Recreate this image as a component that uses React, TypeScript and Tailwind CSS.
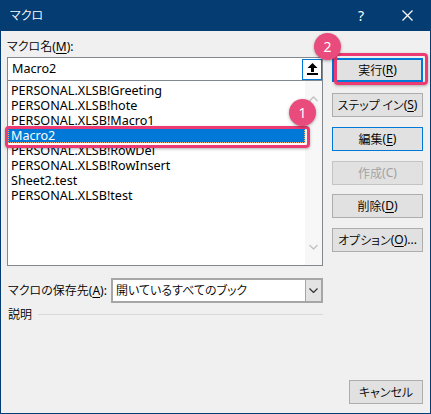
const rows = [
  "PERSONAL.XLSB!Greeting",
  "PERSONAL.XLSB!hote",
  "PERSONAL.XLSB!Macro1",
  "Macro2",
  "PERSONAL.XLSB!RowDel",
  "PERSONAL.XLSB!RowInsert",
  "Sheet2.test",
  "PERSONAL.XLSB!test",
];

// japanese text, narrower + lighter like Meiryo UI
const J = ({ children }: { children: React.ReactNode }) => (
  <span className="font-['Noto_Sans_CJK_JP',sans-serif] font-[350] [font-feature-settings:'palt']">{children}</span>
);

const Btn = ({ label, k, rest, cls, top }: { label: string; k: string; rest?: string; cls?: string; top: string }) => (
  <div className={`${top} h-[24px] flex items-center justify-center bg-[#e1e1e1] border ${cls || "border-[#adadad]"}`}>
    <J>{label}</J>(<span className="underline underline-offset-2">{k}</span>){rest}
  </div>
);

export default function App() {
  return (
    <div className="w-[431px] h-[414px] bg-[#053c72] flex flex-col px-[1px] pb-[1px] text-[12px] text-black font-['Noto_Sans','Noto_Sans_CJK_JP',sans-serif]">
      <div className="h-[31px] shrink-0 flex items-center text-white">
        <span className="ml-[9px]"><J>マクロ</J></span>
        <span className="ml-auto mr-[38px] text-[14px]">?</span>
        <svg width="11" height="11" viewBox="0 0 11 11" className="mr-[17px]">
          <path d="M0.5 0.5 L10.5 10.5 M10.5 0.5 L0.5 10.5" stroke="white" strokeWidth="1.2" />
        </svg>
      </div>

      <div className="flex-1 bg-[#f0f0f0] relative flex flex-col">
        <div className="flex">
          <div className="w-[316px] ml-[6px] flex flex-col">
            <div className="mt-[6px] h-[18px] leading-[18px]">
              <J>マクロ名</J>(<span className="underline underline-offset-2">M</span>):
            </div>
            <div className="mt-[2px] h-[24px] bg-white border border-[#828790] flex items-center text-[12.6px]">
              <span className="pl-[4px]">Macro2</span>
              <div className="ml-auto w-[20px] h-[21px] border border-[#0078d7] flex items-center justify-center">
                <svg width="11" height="12" viewBox="0 0 11 12">
                  <path d="M5.5 0 L10.5 5 L7 5 L7 9 L4 9 L4 5 L0.5 5 Z" fill="black" />
                  <rect x="0" y="10" width="11" height="2" fill="black" />
                </svg>
              </div>
            </div>
            <div className="h-[185px] bg-white border border-t-0 border-[#828790] flex text-[12.6px]">
              <div className="flex-1 pt-[2px]">
                {rows.map((r) =>
                  r === "Macro2" ? (
                    <div key={r} className="h-[15px] leading-[13px] bg-[#0078d7] text-white pl-[2px] border border-dotted border-[#f5b070]">
                      {r}
                    </div>
                  ) : (
                    <div key={r} className="h-[15px] leading-[15px] pl-[3px]">
                      {r}
                    </div>
                  )
                )}
              </div>
              <div className="w-[17px] bg-[#f7f7f7] flex flex-col items-center justify-between py-[15px]">
                <svg width="9" height="6" viewBox="0 0 9 6">
                  <path d="M0.5 5 L4.5 1 L8.5 5" stroke="#c2c2c2" strokeWidth="1.3" fill="none" />
                </svg>
                <svg width="9" height="6" viewBox="0 0 9 6">
                  <path d="M0.5 1 L4.5 5 L8.5 1" stroke="#c2c2c2" strokeWidth="1.3" fill="none" />
                </svg>
              </div>
            </div>
            <div className="mt-[12px] h-[25px] flex items-center">
              <span className="w-[104px] pl-[1px]">
                <J>マクロの保存先</J>(<span className="underline underline-offset-2">A</span>):
              </span>
              <div className="flex-1 h-[25px] bg-white border-2 border-[#a6a6a6] flex items-center">
                <span className="pl-[3px]"><J>開いているすべてのブック</J></span>
                <div className="ml-auto w-[16px] h-full bg-[#e3e3e3] border-l border-[#a6a6a6] flex items-center justify-center">
                  <svg width="9" height="5" viewBox="0 0 9 5">
                    <path d="M0.5 0.5 L4.5 4.5 L8.5 0.5" stroke="#333" strokeWidth="1.2" fill="none" />
                  </svg>
                </div>
              </div>
            </div>
            <div className="mt-[2px] h-[18px] flex items-center">
              <span className="pl-[1px]"><J>説明</J></span>
              <div className="flex-1 ml-[6px] h-px bg-[#d9d9d9]" />
            </div>
          </div>

          <div className="w-[91px] ml-[9px] flex flex-col">
            <Btn top="mt-[27px]" label="実行" k="R" cls="border-2 border-[#0078d7]" />
            <Btn top="mt-[11px]" label="ステップ イン" k="S" />
            <Btn top="mt-[10px]" label="編集" k="E" cls="border-[#0078d7]" />
            <div className="mt-[10px] h-[24px] flex items-center justify-center bg-[#e1e1e1] border border-[#c4c4c4] text-[#a0a0a0]">
              <J>作成</J>(C)
            </div>
            <Btn top="mt-[9px]" label="削除" k="D" />
            <Btn top="mt-[10px]" label="オプション" k="O" rest="..." />
          </div>
        </div>

        <div className="mt-auto mb-[9px] mr-[7px] self-end w-[74px] h-[24px] flex items-center justify-center bg-[#e1e1e1] border border-[#adadad]">
          <J>キャンセル</J>
        </div>

        <div className="absolute left-[4px] top-[95px] w-[305px] h-[22px] border-[3px] border-[#ec3a72] rounded-[4px] shadow-[0_1px_3px_rgba(0,0,0,0.3)]" />
        <div className="absolute left-[333px] top-[22px] w-[94px] h-[32px] border-[3px] border-[#ec3a72] rounded-[4px] shadow-[0_1px_3px_rgba(0,0,0,0.3)]" />
        <div className="absolute left-[288px] top-[68px] w-[27px] h-[27px] rounded-full bg-[#e94b7c] text-white text-[14px] flex items-center justify-center shadow-[0_1px_3px_rgba(0,0,0,0.35)]">
          1
        </div>
        <div className="absolute left-[313px] top-[2px] w-[27px] h-[27px] rounded-full bg-[#e94b7c] text-white text-[14px] flex items-center justify-center shadow-[0_1px_3px_rgba(0,0,0,0.35)]">
          2
        </div>
      </div>
    </div>
  );
}
